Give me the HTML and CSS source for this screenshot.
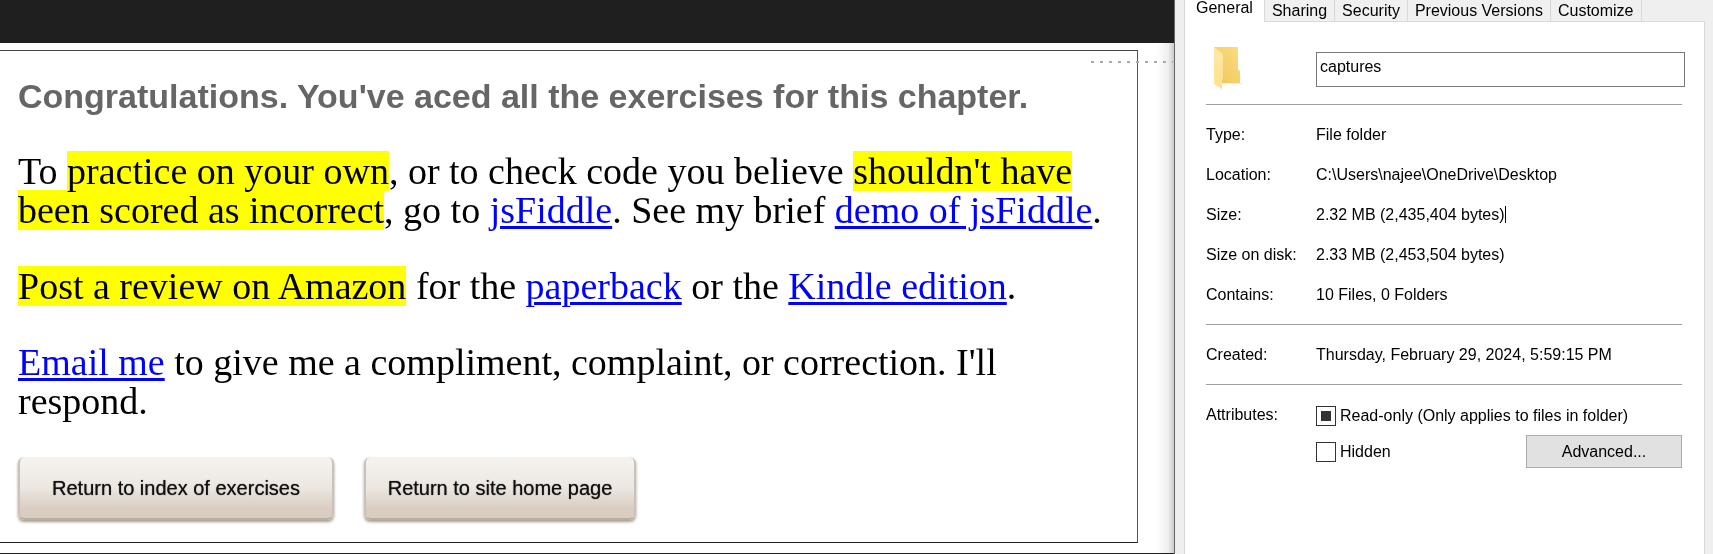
FILE: index.html
```html
<!DOCTYPE html>
<html lang="en">
<head>
<meta charset="utf-8">
<title>Exercises and folder properties</title>
<link rel="stylesheet" href="styles.css">
</head>
<body>
<main class="browser">
  <div class="topbar"></div>
  <section class="page">
    <div class="card">
      <h1 class="title">Congratulations. You've aced all the exercises for this chapter.</h1>
      <p class="text">To <mark class="hl">practice on your own</mark>, or to check code you believe <mark class="hl">shouldn't have been scored as incorrect</mark>, go to <a href="#fiddle">jsFiddle</a>. See my brief <a href="#demo">demo of jsFiddle</a>.</p>
      <p class="text"><mark class="hl">Post a review on Amazon</mark> for the <a href="#paperback">paperback</a> or the <a href="#kindle">Kindle edition</a>.</p>
      <p class="text"><a href="#email">Email me</a> to give me a compliment, complaint, or correction. I'll respond.</p>
      <div class="actions">
        <button class="btn btn-index" type="button">Return to index of exercises</button>
        <button class="btn btn-home" type="button">Return to site home page</button>
      </div>
    </div>
    <div class="dots"></div>
  </section>
</main>
<aside class="dialog">
  <div class="tabs" role="tablist">
    <button class="tab active" type="button" role="tab" aria-selected="true">General</button>
    <button class="tab" type="button" role="tab">Sharing</button>
    <button class="tab" type="button" role="tab">Security</button>
    <button class="tab" type="button" role="tab">Previous Versions</button>
    <button class="tab" type="button" role="tab">Customize</button>
    <span class="tab-rest"></span>
  </div>
  <div class="panel">
    <div class="row name-row">
      <svg class="folder" viewBox="0 0 30 44" width="30" height="44" aria-hidden="true">
        <defs>
          <linearGradient id="back" x1="0" y1="1" x2="1" y2="0"><stop offset="0" stop-color="#edc55f"/><stop offset="1" stop-color="#fddd7d"/></linearGradient>
          <linearGradient id="front" x1="0" y1="0" x2="0" y2="1"><stop offset="0" stop-color="#ffe9a8"/><stop offset="1" stop-color="#ffe08c"/></linearGradient>
        </defs>
        <path d="M8 36h21l-1 1H8zM5 41l4 1-2 1z" fill="#ececec"/>
        <path d="M0 0h24v22l2 2v12H0z" fill="url(#back)"/>
        <path d="M0 0l9 7v24l-1 2v9l-8-5z" fill="url(#front)"/>
      </svg>
      <input class="name" type="text" value="captures" aria-label="Folder name">
    </div>
    <hr class="rule">
    <dl class="facts">
      <dt>Type:</dt><dd>File folder</dd>
      <dt>Location:</dt><dd>C:\Users\najee\OneDrive\Desktop</dd>
      <dt>Size:</dt><dd><span class="caret">2.32 MB (2,435,404 bytes)</span></dd>
      <dt>Size on disk:</dt><dd>2.33 MB (2,453,504 bytes)</dd>
      <dt>Contains:</dt><dd>10 Files, 0 Folders</dd>
    </dl>
    <hr class="rule">
    <dl class="facts">
      <dt>Created:</dt><dd>Thursday, February 29, 2024, 5:59:15 PM</dd>
    </dl>
    <hr class="rule">
    <div class="row attrs">
      <span class="attrs-label">Attributes:</span>
      <div class="checks">
        <label class="check"><input class="box mixed" type="checkbox">Read-only (Only applies to files in folder)</label>
        <div class="check-line">
          <label class="check"><input class="box" type="checkbox">Hidden</label>
          <button class="advanced" type="button">Advanced...</button>
        </div>
      </div>
    </div>
  </div>
</aside>
</body>
</html>
```
FILE: styles.css
```css
* { box-sizing: border-box; }

body {
  margin: 0;
  min-height: 100vh;
  display: grid;
  grid-template-columns: minmax(0, 1174fr) minmax(0, 539fr);
  background: #fff;
  font: 16px/20px "Liberation Sans", Arial, sans-serif;
  color: #000;
}

button, input { font: inherit; color: inherit; margin: 0; }

.browser {
  display: flex;
  flex-direction: column;
  border-bottom: 1px solid #222;
}
.topbar { height: 43px; background: #1f1f1f; }

.page {
  position: relative;
  flex: 1;
  padding: 7px 36px 10px 0;
  background: linear-gradient(to left, #ccc, #eee 6px, #fff 18px);
}
.card {
  height: 100%;
  padding: 24px 18px 16px;
  border: solid #222;
  border-width: 1px 1px 1px 0;
  border-top-color: #444;
  border-right-color: #555;
  background: #fff;
}
.title {
  margin: 0;
  font-size: 34px;
  line-height: 42px;
  color: #666;
}
.text {
  margin: 37px 0 0;
  font: 38px/39px "Liberation Serif", Georgia, serif;
}
.title + .text { margin-top: 35px; }
.text a {
  color: #00f;
  text-decoration-thickness: 3px;
  text-underline-offset: 3px;
}
/* Multiply keeps descenders visible where one line's highlight meets the next. */
.hl {
  color: inherit;
  background: linear-gradient(#ff0, #ff0) center / 100% 40px no-repeat;
  mix-blend-mode: multiply;
}
.actions { display: flex; gap: 30px; margin-top: 36px; }
.btn {
  height: 63px;
  border: 2px solid #c9c2ba;
  border-top: 0;
  border-bottom-color: #b9aea2;
  border-radius: 6px;
  background: linear-gradient(#f5f3f0, #ece7e1 50%, #d9cdc1 85%, #d9cdc1);
  box-shadow: 0 2px 3px #a89c90;
  font-size: 20px;
  color: #111;
  text-shadow: 0 0 1px #333;
}
.btn-index { width: 316px; }
.btn-home { width: 272px; }

.dots {
  position: absolute;
  top: 18px;
  right: 1px;
  width: 82px;
  height: 2px;
  background: repeating-linear-gradient(to right, #aaa 0 3px, transparent 3px 9px);
}

.dialog {
  display: flex;
  flex-direction: column;
  padding: 0 8px 0 9px;
  border-left: 1px solid #666;
  background: #efefef;
}
.tabs { display: flex; height: 22px; overflow: hidden; }
.tab {
  height: 22px;
  padding: 0 7px;
  border: solid #d9d9d9;
  border-width: 0 1px 1px 0;
  background: #f0f0f0;
  line-height: 20px;
  white-space: nowrap;
}
.tab.active {
  padding: 0 11px 6px;
  border-left-width: 1px;
  border-bottom: 0;
  background: #fff;
  line-height: 16px;
}
.tab-rest { flex: 1; border-bottom: 1px solid #d9d9d9; }

.panel {
  flex: 1;
  padding: 25px 22px 0 21px;
  border: solid #d9d9d9;
  border-width: 0 1px;
  background: #fff;
}
.row, .facts { display: grid; grid-template-columns: 110px minmax(0, 1fr); }
.folder { margin-left: 8px; }
.name-row { height: 57px; align-items: start; }
.name {
  width: calc(100% + 3px);
  height: 35px;
  margin-top: 5px;
  padding: 0 3px 6px;
  border: 1px solid #7a7a7a;
  background: #fff;
}
.rule { margin: 0; border: 0; border-top: 1px solid #a0a0a0; }
.facts { margin: 0; padding: 20px 0 19px; row-gap: 20px; }
.facts dd { margin: 0; }
.caret { border-right: 1px solid #000; }
.attrs { padding-top: 20px; }
.checks { display: grid; gap: 9px; padding-top: 1px; }
.check { display: flex; align-items: center; gap: 4px; }
.check-line { display: flex; justify-content: space-between; align-items: center; }
.box {
  appearance: none;
  width: 20px;
  height: 20px;
  border: 1px solid #333;
  background: #fff;
}
.mixed { background: linear-gradient(#333, #333) center / 10px 10px no-repeat; }
.advanced {
  width: 156px;
  height: 33px;
  border: 1px solid #adadad;
  background: #e1e1e1;
}
```
